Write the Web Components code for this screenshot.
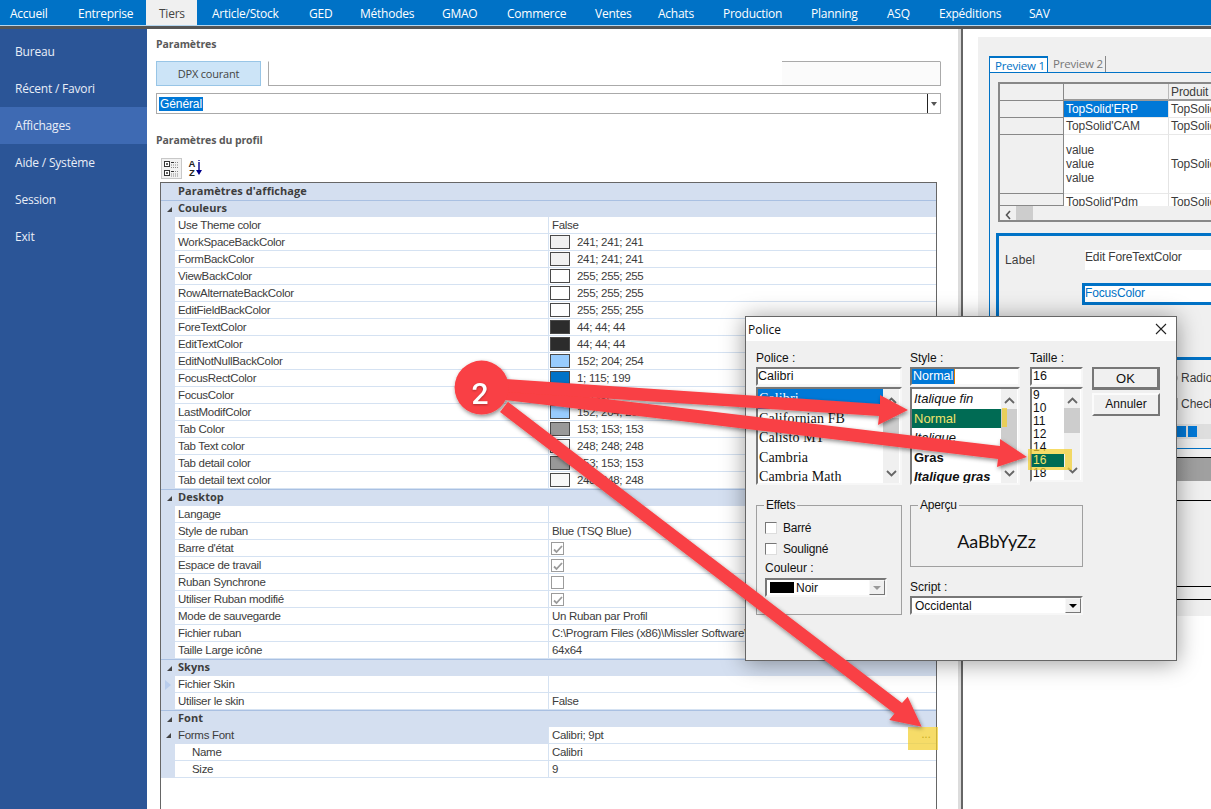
<!DOCTYPE html>
<html lang="fr"><head><meta charset="utf-8"><title>Paramètres</title>
<style>html,body{margin:0;padding:0;height:100%;overflow:hidden;background:#fff}body{font-family:"Liberation Sans",sans-serif}</style></head>
<body>
<app-shell>
  <top-nav slot="nav">
    <nav-tab style="--w:64px;--p:10px">Accueil</nav-tab><nav-tab style="--w:82px">Entreprise</nav-tab><nav-tab active style="--w:51px;--p:13px">Tiers</nav-tab><nav-tab style="--w:98px;--p:15px">Article/Stock</nav-tab><nav-tab style="--w:51px">GED</nav-tab><nav-tab style="--w:82px">Méthodes</nav-tab><nav-tab style="--w:65px">GMAO</nav-tab><nav-tab style="--w:88px">Commerce</nav-tab><nav-tab style="--w:63px">Ventes</nav-tab><nav-tab style="--w:65px">Achats</nav-tab><nav-tab style="--w:88px">Production</nav-tab><nav-tab style="--w:76px">Planning</nav-tab><nav-tab style="--w:52px">ASQ</nav-tab><nav-tab style="--w:90px">Expéditions</nav-tab><nav-tab style="--w:60px">SAV</nav-tab>
  </top-nav>
  <side-nav slot="side">
    <side-item>Bureau</side-item><side-item>Récent / Favori</side-item><side-item active>Affichages</side-item><side-item>Aide / Système</side-item><side-item>Session</side-item><side-item>Exit</side-item>
  </side-nav>
  <settings-panel slot="main">
    <prop-grid>
      <cat-row notoggle>Paramètres d'affichage</cat-row>
      <cat-row>Couleurs</cat-row>
      <prop-row><span>Use Theme color</span><span slot="value">False</span></prop-row>
      <prop-row swatch="rgb(241,241,241)"><span>WorkSpaceBackColor</span><span slot="value">241; 241; 241</span></prop-row>
      <prop-row swatch="rgb(241,241,241)"><span>FormBackColor</span><span slot="value">241; 241; 241</span></prop-row>
      <prop-row swatch="#fff"><span>ViewBackColor</span><span slot="value">255; 255; 255</span></prop-row>
      <prop-row swatch="#fff"><span>RowAlternateBackColor</span><span slot="value">255; 255; 255</span></prop-row>
      <prop-row swatch="#fff"><span>EditFieldBackColor</span><span slot="value">255; 255; 255</span></prop-row>
      <prop-row swatch="rgb(44,44,44)"><span>ForeTextColor</span><span slot="value">44; 44; 44</span></prop-row>
      <prop-row swatch="rgb(44,44,44)"><span>EditTextColor</span><span slot="value">44; 44; 44</span></prop-row>
      <prop-row swatch="rgb(152,204,254)"><span>EditNotNullBackColor</span><span slot="value">152; 204; 254</span></prop-row>
      <prop-row swatch="rgb(1,115,199)"><span>FocusRectColor</span><span slot="value">1; 115; 199</span></prop-row>
      <prop-row swatch="rgb(1,115,199)"><span>FocusColor</span><span slot="value">1; 115; 199</span></prop-row>
      <prop-row swatch="rgb(152,204,254)"><span>LastModifColor</span><span slot="value">152; 204; 254</span></prop-row>
      <prop-row swatch="rgb(153,153,153)"><span>Tab Color</span><span slot="value">153; 153; 153</span></prop-row>
      <prop-row swatch="rgb(248,248,248)"><span>Tab Text color</span><span slot="value">248; 248; 248</span></prop-row>
      <prop-row swatch="rgb(153,153,153)"><span>Tab detail color</span><span slot="value">153; 153; 153</span></prop-row>
      <prop-row swatch="rgb(248,248,248)"><span>Tab detail text color</span><span slot="value">248; 248; 248</span></prop-row>
      <cat-row>Desktop</cat-row>
      <prop-row><span>Langage</span></prop-row>
      <prop-row><span>Style de ruban</span><span slot="value">Blue (TSQ Blue)</span></prop-row>
      <prop-row check="on"><span>Barre d'état</span></prop-row>
      <prop-row check="on"><span>Espace de travail</span></prop-row>
      <prop-row check="off"><span>Ruban Synchrone</span></prop-row>
      <prop-row check="on"><span>Utiliser Ruban modifié</span></prop-row>
      <prop-row><span>Mode de sauvegarde</span><span slot="value">Un Ruban par Profil</span></prop-row>
      <prop-row><span>Fichier ruban</span><span slot="value">C:\Program Files (x86)\Missler Software\V</span></prop-row>
      <prop-row><span>Taille Large icône</span><span slot="value">64x64</span></prop-row>
      <cat-row>Skyns</cat-row>
      <prop-row marker><span>Fichier Skin</span></prop-row>
      <prop-row><span>Utiliser le skin</span><span slot="value">False</span></prop-row>
      <cat-row>Font</cat-row>
      <prop-row expander ellipsis><span>Forms Font</span><span slot="value">Calibri; 9pt</span></prop-row>
      <prop-row indent><span>Name</span><span slot="value">Calibri</span></prop-row>
      <prop-row indent><span>Size</span><span slot="value">9</span></prop-row>
    </prop-grid>
  </settings-panel>
  <preview-panel slot="preview"></preview-panel>
  <font-dialog slot="over"></font-dialog>
  <arrow-overlay slot="over"></arrow-overlay>
</app-shell>
<script>
function def(name, css, html, init){
  customElements.define(name, class extends HTMLElement{
    connectedCallback(){
      if(this.shadowRoot) return;
      const r=this.attachShadow({mode:'open'});
      const h=typeof html==='function'?html(this):html;
      r.innerHTML='<style>'+css+'</style>'+h;
      if(init) init(this,r);
    }
  });
}
const SANS='"Liberation Sans",sans-serif';
def('app-shell',`
:host{display:grid;position:relative;width:1211px;height:809px;overflow:hidden;grid-template-columns:148px 810px 1fr;grid-template-rows:28px 1fr;font-family:${SANS}}`,
`<slot name="nav"></slot><slot name="side"></slot><slot name="main"></slot><slot name="preview"></slot><slot name="over"></slot>`);

def('top-nav',`:host{grid-column:1/4;display:flex;height:25px;background:#0072c6;border-bottom:1px solid #b5d6ee;box-shadow:0 2px 0 1px #555;margin-bottom:3px;position:relative;z-index:1}`,`<slot></slot>`);
def('nav-tab',`:host{display:block;flex:none;box-sizing:border-box;width:var(--w);padding-left:var(--p,14px);font:12px/27px "Open Sans",sans-serif;letter-spacing:-.25px;color:#fff;height:25px;white-space:nowrap}
:host([active]){background:#f0f0f0;color:#444}`,`<slot></slot>`);
def('side-nav',`:host{display:block;background:#2b5597;padding-top:5px;margin-right:1px}`,`<slot></slot>`);
def('side-item',`:host{display:block;height:37px;padding-left:15px;font:12px/37px "Open Sans",sans-serif;letter-spacing:-.2px;color:#e9eef7}
:host([active]){background:#3e6ab3}`,`<slot></slot>`);

def('settings-panel',`
:host{display:flex;flex-direction:column;min-height:0;padding:9px 17px 0 8px;box-sizing:border-box;background:#fff;color:#444}
h2{font:bold 10.5px/14px "Open Sans",sans-serif;color:#595959;margin:0;letter-spacing:-.1px}
.dpx{display:flex;gap:7px;margin-top:10px;height:25px}
.btn{width:105px;box-sizing:border-box;background:#cce4f7;border:1px solid #98c5e6;font:11px/23px "Open Sans",sans-serif;letter-spacing:-.2px;color:#444;text-align:center}
.inp{flex:1;box-sizing:border-box;border:1px solid #aaa;border-top-color:#fff;background:linear-gradient(90deg,#fff 76.5%,#fbfbfb 76.5%);position:relative}
.inp i{display:block;height:1px;background:#aaa;margin-left:76.5%;margin-top:-1px}
.combo{display:flex;margin-top:7px;height:21px;box-sizing:border-box;border:1px solid #aaa;padding-left:2px;align-items:center;font:12px "Liberation Sans",sans-serif}
.combo b{font-weight:400;background:#0078d7;color:#fff;padding:0 1px;line-height:14px;letter-spacing:-.1px}
.combo span{margin-left:auto;width:13px;height:19px;border-left:1px solid #222;display:grid;place-items:center;box-sizing:border-box}
.combo span::after{content:"";border:3px solid transparent;border-top:4px solid #555;border-bottom:0}
h2.p2{margin-top:19px}
.bar{display:flex;align-items:center;gap:6px;margin:10px 0 3px 5px;height:22px}
.bar .cat{width:21px;height:21px;box-sizing:border-box;background:#f2f2f2;border:1px solid #c8c8c8;display:grid;place-items:center}
.az{display:flex;align-items:center;width:14px;height:18px;gap:0}
.az span{display:block;font:bold 9.500px/9px "Liberation Sans",sans-serif;color:#222;width:8px;text-align:center}
.g{flex:1;min-height:0;margin:0 4px 0 4px;display:flex;flex-direction:column}`,
`<h2>Paramètres</h2>
<div class="dpx"><div class="btn">DPX courant</div><div class="inp"><i></i></div></div>
<div class="combo"><b>Général</b><span></span></div>
<h2 class="p2">Paramètres du profil</h2>
<div class="bar"><div class="cat"><svg width="15" height="17" viewBox="0 0 15 17"><g fill="none" stroke="#333"><rect x=".5" y="1.5" width="5" height="5" fill="#fff"/><rect x=".5" y="10.5" width="5" height="5" fill="#fff"/><path d="M2 4h2M3 3v2M2 13h2M3 12v2M7 2.5h3M7 11.5h3"/></g><path d="M7 5h7M7 7.500h7M7 14h7M7 16h7M11 2.500h3M11 11.500h3" stroke="#888" stroke-dasharray="1 1"/></svg></div>
<div class="az"><div><span>A</span><span>Z</span></div><svg width="6" height="16" viewBox="0 0 6 16"><path d="M3 0v1M3 2v9" stroke="#00008b" stroke-width="1.400"/><path d="M0 10h6l-3 5z" fill="#00008b"/></svg></div></div>
<div class="g"><slot></slot></div>`);

def('prop-grid',`:host{display:block;flex:1;box-sizing:border-box;border:1px solid #666;border-bottom:0;background:#fff}`,`<slot></slot>`);

def('cat-row',`
:host{display:flex;height:17px;box-sizing:border-box;background:#d4dff0;border-top:1px solid #a9c0e2;font:bold 11px/14px "Open Sans",sans-serif;letter-spacing:.05px;color:#3d3d3d}
:host([notoggle]){border-top:0;line-height:15px}
.t{width:17px;flex:none;display:grid;place-items:center}
.t i{width:0;height:0;border-style:solid;border-width:0 0 5px 5px;border-color:transparent transparent #444 transparent}`,
el=>`<div class="t">${el.hasAttribute('notoggle')?'':'<i></i>'}</div><slot></slot>`);

const chk='<svg width="12" height="12" viewBox="0 0 12 12"><path d="M2 6.500l2.500 2.500L10 3" fill="none" stroke="#9a9a9a" stroke-width="1.800"/></svg>';
def('prop-row',`
:host{display:flex;height:17px;box-sizing:border-box;font:11.5px/16px "Liberation Sans",sans-serif;letter-spacing:-.3px;color:#3c3c3c;background:#fff}
.gut{width:14px;flex:none;background:#d4dff0;display:grid;place-items:center;height:17px}
.gut i{width:0;height:0;border-style:solid;border-width:0 0 5px 5px;border-color:transparent transparent #444 transparent}
.gut u{width:0;height:0;border-style:solid;border-width:5px 0 5px 6px;border-color:transparent transparent transparent #b9cdec}
.nm{width:373px;flex:none;box-sizing:border-box;padding-left:3px;border-bottom:1px solid #d5e2f2;white-space:nowrap;overflow:hidden}
:host([indent]) .nm{padding-left:17px}
:host([expander]) .nm{background:#d4dff0;border-bottom-color:#d4dff0}
.vl{flex:1;min-width:0;display:flex;align-items:center;box-sizing:border-box;border-left:1px solid #d5e2f2;border-bottom:1px solid #d5e2f2;padding-left:3px;white-space:nowrap;overflow:hidden;height:17px}
.sw{width:20px;height:14px;box-sizing:border-box;border:1px solid #4a4a4a;margin:0 7px 0 -2px;flex:none}
.ck{width:13px;height:13px;box-sizing:border-box;border:1px solid #9c9c9c;display:grid;place-items:center;background:#fff;margin:0 0 0 -1px}
.el{margin-left:auto;margin-right:5px;color:#6b5f22;font:bold 9px/10px "Liberation Sans",sans-serif;letter-spacing:.6px}`,
el=>{
  const sw=el.getAttribute('swatch'),ck=el.getAttribute('check');
  return `<div class="gut">${el.hasAttribute('expander')?'<i></i>':''}${el.hasAttribute('marker')?'<u></u>':''}</div>
  <div class="nm"><slot></slot></div>
  <div class="vl">${sw?`<div class="sw" style="background:${sw}"></div>`:''}${ck?`<div class="ck">${ck==='on'?chk:''}</div>`:''}<slot name="value"></slot>${el.hasAttribute('ellipsis')?'<span class="el">...</span>':''}</div>`;
});

def('preview-panel',`
:host{display:block;position:relative;overflow:hidden;background:#fff;border-left:3px solid #dcdcdc;box-sizing:border-box;box-shadow:inset 2px 0 0 0 #666;padding:9px 0 0 17px;font:12px/14px "Liberation Sans",sans-serif;color:#3c3c3c}
.gray{width:300px;height:579px;background:#f0f0f0;padding:18px 0 0 11px;box-sizing:border-box}
.tabs{display:flex;height:17px;width:119px;align-items:flex-end;font:11.500px/15px "Open Sans",sans-serif;letter-spacing:-.2px}
.tabs div{height:16px;box-sizing:border-box;padding-left:5px}
.t1{width:59px;border:1px solid #0072c6;border-bottom:0;border-top-width:2px;background:#fff;color:#0072c6}
.t2{width:58px;color:#777;border-right:1px solid #888}
.blue{border:1px solid #0072c6;border-width:1px 0 1px 1px;padding:9px 0 0 8px;height:377px;box-sizing:border-box;width:300px}
.grid{width:290px;height:140px;border:1px solid #888;border-width:2px 0 2px 2px;box-sizing:border-box;background:#fff;display:flex;flex-direction:column;overflow:hidden}
.r{display:flex;height:17px;flex:none;box-sizing:border-box;letter-spacing:-.1px}
.r>div{box-sizing:border-box;line-height:16px;padding-left:2px;white-space:nowrap}
.c0{width:64px;background:#f0f0f0;border-right:1px solid #888;border-bottom:1px solid #888}
.c1{width:105px;border-right:1px solid #e4e4e4;border-bottom:1px solid #e8e8e8}
.c2{width:100px;border-bottom:1px solid #e8e8e8}
.hd .c1,.hd .c2{background:#f0f0f0;border-bottom:2px solid #999}.hd .c1{border-right:1px solid #bbb}
.sel .c1{background:#0078d7;color:#fff}
.v{height:59px}.v>div{display:flex;align-items:center;line-height:14px}
.sb{height:17px;flex:none;position:relative;background:#f0f0f0;display:flex;align-items:center;z-index:1}
.sb svg{margin-left:5px}.sb i{display:block;width:17px;height:17px;background:#cdcdcd;margin-left:5px}
.cut{flex:none;height:12px;overflow:hidden}
.box{width:300px;height:127px;box-sizing:border-box;border:3px solid #0072c6;margin:11px 0 0 -2px;display:grid;grid-template-columns:86px 1fr;grid-template-rows:auto auto;align-content:start;padding:14px 0 0 6px}
.box .l{line-height:16px;padding-top:2px;letter-spacing:.15px}
.box .e{background:#fff;height:20px;line-height:14px;letter-spacing:-.15px;margin-left:-6px;width:210px}
.box .f{grid-column:2;border:3px solid #0072c6;height:22px;box-sizing:border-box;margin:13px 0 0 -9px;background:#fff;color:#0072c6;line-height:15px;letter-spacing:-.15px}
.o{margin-left:188px;display:flex;align-items:center;height:26px;gap:3px}
.rd{width:10px;height:10px;border:1px solid #bbb;border-radius:50%;flex:none;box-sizing:border-box;margin-left:-8px}
.cb{width:10px;height:12px;border:1px solid #bbb;flex:none;box-sizing:border-box;margin-left:-8px}
.opts{margin-top:5px;margin-left:-10px;width:300px}
.pr{margin:7px 0 0 172px;height:15px;background:#dedede;display:flex;gap:2px;padding:2px 0;box-sizing:border-box;width:120px}
.pr i{width:9px;background:#0078d7;display:block}.pr i:first-child{margin-left:7px}
.dk{height:24px;margin:8px 0 0 0;border-top:1px solid #000;box-sizing:border-box;background:linear-gradient(90deg,#808080,#a0a0a0 70%)}
.bl{height:1px;background:#000}`,
`<div class="gray"><div class="tabs"><div class="t1">Preview 1</div><div class="t2">Preview 2</div></div>
<div class="blue">
  <div class="grid">
    <div class="r hd"><div class="c0"></div><div class="c1"></div><div class="c2">Produit</div></div>
    <div class="r sel"><div class="c0"></div><div class="c1">TopSolid'ERP</div><div class="c2">TopSolid'</div></div>
    <div class="r"><div class="c0"></div><div class="c1">TopSolid'CAM</div><div class="c2">TopSolid'</div></div>
    <div class="r v"><div class="c0"></div><div class="c1">value<br>value<br>value</div><div class="c2">TopSolid'</div></div>
    <div class="r cut"><div class="c0"></div><div class="c1" style="border-bottom:0">TopSolid'Pdm</div><div class="c2" style="border-bottom:0">TopSolid'</div></div>
    <div class="sb"><svg width="6" height="10" viewBox="0 0 6 10"><path d="M5 1L1.500 5 5 9" fill="none" stroke="#555" stroke-width="1.600"/></svg><i></i></div>
  </div>
  <div class="box"><div class="l">Label</div><div class="e">Edit ForeTextColor</div><div class="f">FocusColor</div></div>
  <div class="opts"><div class="o" style="margin-top:5px"><span class="rd"></span><span>Radiol</span></div><div class="o"><span class="cb"></span><span>Check</span></div></div>
  <div class="pr"><i></i><i></i></div>
</div>
<div class="dk"></div>
<div class="bl" style="margin-top:19px"></div>
<div class="bl" style="margin-top:85px"></div>
<div class="bl" style="margin-top:12px"></div>
</div>`);

def('list-box',`
:host{display:flex;box-sizing:border-box;background:#fff;border:2px solid;border-color:#777 #f7f7f7 #f7f7f7 #777;overflow:hidden;height:var(--h)}
.i{flex:1;min-width:0;overflow:hidden}
.sb{width:16px;flex:none;background:#f0f0f0;display:flex;flex-direction:column;margin-right:1px}
.sb svg{display:block;flex:none;margin:8px auto 0}
.sb svg:last-child{margin:auto auto 6px}
.th{background:#cdcdcd;flex:none;margin-top:var(--tt);height:var(--th)}`,
`<div class="i"><slot></slot></div><div class="sb"><svg width="11" height="7" viewBox="0 0 11 7"><path d="M1 6l4.500-4.500L10 6" fill="none" stroke="#666" stroke-width="1.800"/></svg><div class="th"></div><svg width="11" height="7" viewBox="0 0 11 7"><path d="M1 1l4.500 4.500L10 1" fill="none" stroke="#666" stroke-width="1.800"/></svg></div>`);
def('list-item',`
:host{display:block;height:var(--ih,19.5px);padding-left:var(--ip,2px);font:var(--if);line-height:var(--ih,19.5px);color:#111;white-space:nowrap}
:host([sel]){background:#0078d7;color:#fff}
:host([green]){background:#006b54;color:#f2e36b}`,`<slot></slot>`);

def('font-dialog',`
:host{position:absolute;left:745px;top:316px;width:432px;height:345px;box-sizing:border-box;background:#f0f0f0;border:1px solid #666;box-shadow:0 2px 22px rgba(0,0,0,.4);font:12px/14px "Liberation Sans",sans-serif;color:#111;display:flex;flex-direction:column}
.tb{height:24px;flex:none;background:#fff;display:flex;align-items:center;justify-content:space-between;padding:0 9px 0 2px;font:12px "Open Sans",sans-serif}
.bd{flex:1;padding:10px 0 0 10px}
.top{display:flex}
.col{display:flex;flex-direction:column}
.lb{height:15px;line-height:15px}
.in{height:19px;box-sizing:border-box;background:#fff;border:2px solid;border-color:#777 #f7f7f7 #f7f7f7 #777;padding-left:0;font:12.500px/15px "Liberation Sans",sans-serif;margin-top:1px}
.in b{font-weight:400;background:#0078d7;color:#fff;padding:0 1px;border-right:1px solid #e07b00;display:inline-block;line-height:15px}
list-box{margin-top:1px}
.btns{display:flex;flex-direction:column;margin:16px 0 0 9px;gap:3px;width:68px}
.bt{height:23px;box-sizing:border-box;background:#f0f0f0;border:2px solid;border-color:#fbfbfb #777 #777 #fbfbfb;text-align:center;font:12px/19px "Liberation Sans",sans-serif}
.bt.d{border-color:#777;border-width:2px 3px 3px 2px;height:23px;font-size:13px}
.low{display:flex;margin-top:20px}
.fs{box-sizing:border-box;border:1px solid #a0a0a0;position:relative}
.lg{position:absolute;top:-7px;left:7px;background:#f0f0f0;padding:0 2px;font:12px/13px "Liberation Sans",sans-serif;letter-spacing:-.2px}
.ef{width:146px;height:110px;padding:15px 0 0 8px}
.cr{display:flex;align-items:center;gap:6px;height:13px;margin-bottom:8px;letter-spacing:-.2px}
.cr i{width:12px;height:12px;box-sizing:border-box;background:#fff;border:1px solid;border-color:#777 #ddd #ddd #777}
.dd{height:19px;box-sizing:border-box;background:#fff;border:2px solid;border-color:#777 #f7f7f7 #f7f7f7 #777;display:flex;align-items:center;padding-left:2px}
.ar{margin-left:auto;width:16px;height:15px;box-sizing:border-box;border:1px solid;border-color:#f8f8f8 #777 #777 #f8f8f8;background:#f0f0f0;display:grid;place-items:center}
.ar::after{content:"";border:4px solid transparent;border-top:4px solid var(--c,#000);border-bottom:0}
.r{margin-left:8px;width:173px;display:flex;flex-direction:column}
.ap{height:62px;display:grid;place-items:center;padding-top:9px;font:18px "Lato",sans-serif}`,
`<div class="tb"><span>Police</span><svg width="12" height="12" viewBox="0 0 12 12"><path d="M1 1l10 10M11 1L1 11" stroke="#222" stroke-width="1.100"/></svg></div>
<div class="bd">
 <div class="top">
  <div class="col" style="width:146px"><div class="lb">Police :</div><div class="in">Calibri</div>
   <list-box style="--h:98px;--tt:14px;--th:22px">
    <div style="--if:14px 'Liberation Serif',serif;--ih:19.5px;letter-spacing:.12px"><list-item sel style="--ip:1px">Calibri</list-item><list-item style="--ip:1px">Californian FB</list-item><list-item style="--ip:1px">Calisto MT</list-item><list-item style="--ip:1px">Cambria</list-item><list-item style="--ip:1px">Cambria Math</list-item></div>
   </list-box></div>
  <div class="col" style="width:110px;margin-left:8px"><div class="lb">Style :</div><div class="in"><b>Normal</b></div>
   <list-box style="--h:98px;--tt:5px;--th:52px">
    <div style="--if:13px 'Liberation Sans',sans-serif;--ih:19.5px">
    <list-item style="font-style:italic">Italique fin</list-item><list-item green>Normal</list-item><list-item style="font-style:italic">Italique</list-item><list-item style="font-weight:bold">Gras</list-item><list-item style="font-style:italic;font-weight:bold">Italique gras</list-item></div>
   </list-box></div>
  <div class="col" style="width:53px;margin-left:10px"><div class="lb">Taille :</div><div class="in" style="padding-left:1px">16</div>
   <list-box style="--h:95px;--tt:4px;--th:25px">
    <div style="--if:12px 'Liberation Sans',sans-serif;--ih:13px;--ip:1px"><list-item>9</list-item><list-item>10</list-item><list-item>11</list-item><list-item>12</list-item><list-item>14</list-item><list-item green>16</list-item><list-item>18</list-item></div>
   </list-box></div>
  <div class="btns"><div class="bt d">OK</div><div class="bt">Annuler</div></div>
 </div>
 <div class="low">
  <div class="fs ef"><div class="lg">Effets</div>
   <div class="cr"><i></i>Barré</div><div class="cr"><i></i>Souligné</div>
   <div class="lb" style="height:13px;line-height:13px;margin-top:-1px">Couleur :</div>
   <div class="dd" style="width:122px;margin-top:3px"><span style="width:24px;height:11px;background:#000;margin:0 2px 0 1px"></span>Noir<span class="ar" style="--c:#999"></span></div>
  </div>
  <div class="r"><div class="fs ap"><div class="lg">Aperçu</div>AaBbYyZz</div>
   <div class="lb" style="margin-top:13px">Script :</div>
   <div class="dd" style="margin-top:1px"><span style="padding-left:1px">Occidental</span><span class="ar"></span></div></div>
 </div>
</div>`);

def('arrow-overlay',`:host{position:absolute;inset:0;display:block;pointer-events:none}svg{display:block;overflow:visible}`,
`<svg width="1211" height="809" viewBox="0 0 1211 809">
<defs><filter id="s" x="-10%" y="-10%" width="120%" height="120%"><feDropShadow dx="1" dy="2" stdDeviation="2" flood-color="#000" flood-opacity=".45"/></filter></defs>
<g fill="#f2cf2e" fill-opacity=".72">
<rect x="908" y="727" width="30" height="23"/>
<rect x="1002" y="408" width="5" height="19"/>
<path fill-rule="evenodd" d="M1028 449h44v21h-44zM1031 454v13h34v-13z"/>
</g>
<g fill="#f94144" filter="url(#s)">
<polygon points="507.900,401.800 902,703 907.700,696.700 921.700,726.700 889.300,720 894.500,713.600 500,412"/>
<polygon points="505,387 1000,446 1000,439 1027,457 997,467 998,459 505,400"/>
<polygon points="505,379 880,404 880,395 908,410 878,425 879,416 505,392"/>
<circle cx="481.600" cy="387.600" r="27"/>
</g>
<text x="480" y="404" text-anchor="middle" fill="#fff" style="font:500 30px Roboto,sans-serif;filter:drop-shadow(0 1px 1px rgba(0,0,0,.3))">2</text>
</svg>`);
</script>
</body></html>
